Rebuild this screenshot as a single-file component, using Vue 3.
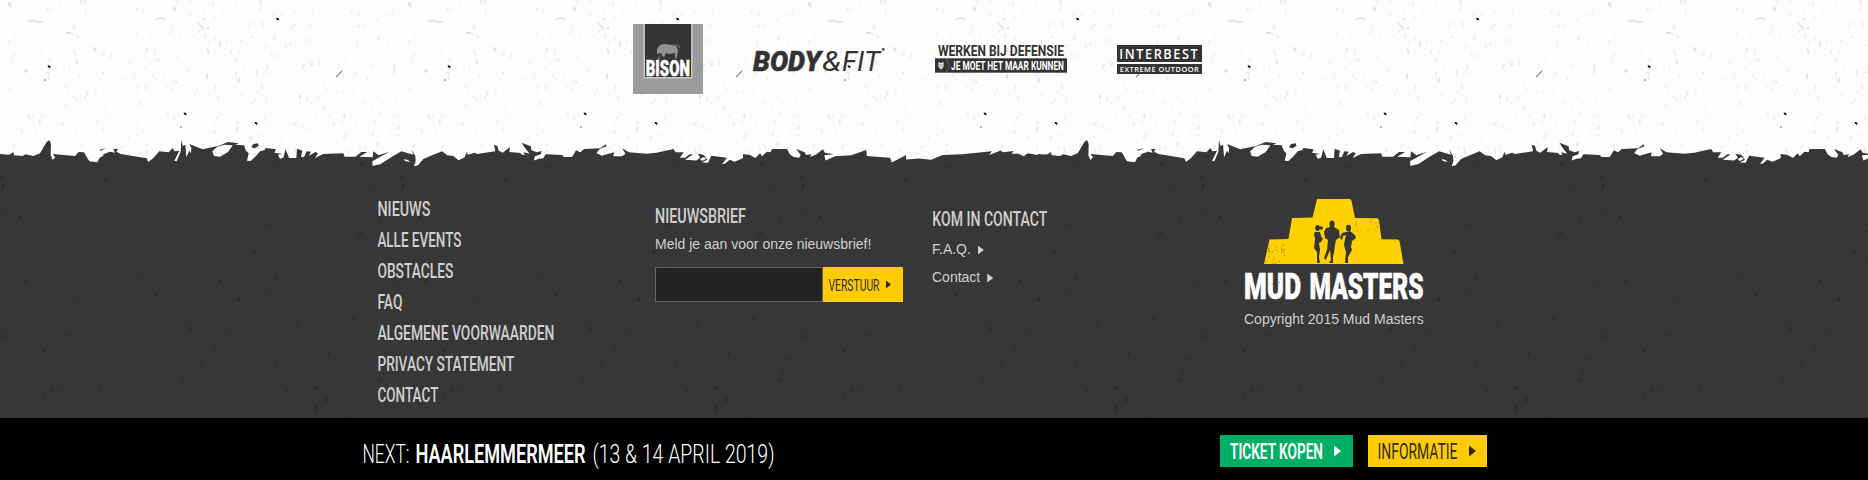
<script setup>
import { h } from 'vue'

// Condensed display lettering: text is fitted to width w with capitals of height cap.
const Cond = ({ t, w, cap, weight = 500, x = 0 }) =>
  h('svg', { width: w, height: Math.round(cap), style: { overflow: 'visible', display: 'block', flex: 'none' } }, [
    h('text', {
      x, y: cap, fill: 'currentColor', textLength: w, lengthAdjust: 'spacingAndGlyphs',
      'font-size': cap / 0.711, 'font-weight': weight,
      'font-family': 'Roboto, "Liberation Sans", sans-serif'
    }, t)
  ])
Cond.props = ['t', 'w', 'cap', 'weight', 'x']

const links = [
  ['NIEUWS', 53], ['ALLE EVENTS', 84], ['OBSTACLES', 76], ['FAQ', 25],
  ['ALGEMENE VOORWAARDEN', 177], ['PRIVACY STATEMENT', 137], ['CONTACT', 61]
]

function rng(seed) {
  let s = seed
  return () => (s = (s * 16807) % 2147483647) / 2147483647
}
function specks(seed, n, w, hgt, lo, hi) {
  const r = rng(seed)
  return Array.from({ length: n }, () => ({
    x: r() * w, y: r() * hgt, rx: 0.5 + r() * 0.8, ry: 0.8 + r() * 2.4,
    a: r() * 60 - 25, o: lo + r() * r() * (hi - lo)
  }))
}
const light = specks(71, 520, 400, 160, 0.015, 0.13)
const dark = specks(913, 170, 400, 280, 0.03, 0.24)
const blots = specks(411, 22, 400, 280, 0.06, 0.22)
const wear = specks(37, 60, 38, 22, 0.4, 0.9)
const ink = [[277.5, 19], [49, 66.6], [185, 113.7], [256, 123.3]]
const dots = [[45, 80], [181, 127], [208, 28], [176, 82]]
</script>

<template>
  <main class="page">
    <section class="partners">
      <svg class="backdrop" width="1868" height="160">
        <defs>
          <pattern id="paper" width="400" height="160" patternUnits="userSpaceOnUse">
            <rect width="400" height="160" fill="#fdfdfd" />
            <ellipse v-for="(s, i) in light" :key="i" :rx="s.rx" :ry="s.ry" :opacity="s.o"
              :transform="`translate(${s.x} ${s.y}) rotate(${s.a})`" />
            <path d="M28 22l5-2 3 2 7 0M156 20l3-2 6 1M198 23l6 6M66 32l7 2" stroke="#dedede" stroke-width="1.5" fill="none" />
            <path d="M336 77l3-2.5M339 74l3-3" stroke="#888" stroke-width="1.1" />
            <path v-for="p in ink" :key="p[0]" :transform="`translate(${p[0]} ${p[1]})`" d="M-1.5-1.2l2 .2 1.3 1.5-1.2 1-1.5-1z" />
            <circle v-for="(p, i) in dots" :key="p[0]" :cx="p[0]" :cy="p[1]" r=".7" :fill="i > 1 ? '#999' : '#444'" />
          </pattern>
        </defs>
        <rect width="1868" height="160" fill="url(#paper)" />
      </svg>

      <div class="logos">
        <svg class="bison" width="70" height="70">
          <rect width="70" height="70" fill="#9b9b9b" />
          <path d="M10.5 0h49v54.5h-49z" fill="#c9c9c9" />
          <path d="M12 0h46v53H12z" fill="#353535" />
          <path d="M24 26c1-4 4-6 8-6 4 1 8 0 11 2l2 4-1 6-1 2-1-1 0-4-5 1-4-1-2 4-2-1 0-2-2-1-3 1z" fill="#929292" />
          <path d="M39 22c4-2 7-1 8 2M27 31l-2 4h3M44 31l-1 4" stroke="#777" fill="none" />
          <text x="12.8" y="51.5" textLength="44" lengthAdjust="spacingAndGlyphs" font-size="22" font-weight="900" fill="#fff" stroke="#fff" stroke-width=".5">BISON</text>
        </svg>
        <svg class="bodyfit" width="132" height="26">
          <g fill="#333" font-style="italic">
            <text x="0" y="23" textLength="68" lengthAdjust="spacingAndGlyphs" font-size="28" font-weight="900" stroke="#333" stroke-width=".5">BODY</text>
            <text x="89" y="23" textLength="38" lengthAdjust="spacingAndGlyphs" font-size="28">FIT</text>
            <text x="69" y="23" textLength="19" lengthAdjust="spacingAndGlyphs" font-size="28">&amp;</text>
          </g>
          <circle cx="130.3" cy="1.2" r="1.5" fill="#555" />
        </svg>
        <svg class="defensie" width="132" height="29">
          <text x="3" y="11.7" textLength="126" lengthAdjust="spacingAndGlyphs" font-size="15" font-weight="700" fill="#333">WERKEN BIJ DEFENSIE</text>
          <rect y="14.3" width="132" height="14.4" fill="#333" />
          <path d="M3.5 18l2.5 1 2.5-1v5L6 25.5 3.5 23z" fill="#eee" />
          <path d="M4 20l2 1 2-1M4 22l2 1 2-1" stroke="#555" stroke-width=".6" fill="none" />
          <path d="M11.5 15l3 6.5-3 6.5" stroke="#777" stroke-width=".7" fill="none" />
          <text x="16" y="26" textLength="113" lengthAdjust="spacingAndGlyphs" font-size="12.3" font-weight="700" fill="#fff">JE MOET HET MAAR KUNNEN</text>
        </svg>
        <svg class="interbest" width="85" height="29">
          <path d="M0 0h85v17H0zM0 19h85v10H0z" fill="#333" />
          <g class="open" fill="#fff">
            <text x="2.3" y="14" textLength="80" lengthAdjust="spacingAndGlyphs" font-size="14.5" font-weight="600" letter-spacing="1.8">INTERBEST</text>
            <text x="2.8" y="26.7" textLength="79.5" lengthAdjust="spacingAndGlyphs" font-size="7.7" font-weight="600" letter-spacing=".5">EXTREME OUTDOOR</text>
          </g>
        </svg>
      </div>
    </section>

    <footer class="footer">
      <svg class="edge" width="1868" height="45">
        <defs>
          <g id="tear">
            <path transform="scale(.33333)" fill="#373737" d="M0 136V72L28 74 40 66 42 76 68 78 76 73 100 78 120 70 140 36 148 30 153 42 152 76 158 90 166 82 158 72 225 78 236 66 252 67 262 84 268 94 292 97 298 84 314 74 305 74 330 65 345 68 340 58 354 56 349 65 362 72 440 85 445 96 460 84 478 64 506 67 518 54 524 64 538 62 523 92 530 94 542 65 544 30 548 48 556 44 559 82 568 62 573 70 574 54 568 42 608 58 654 48 637 64 642 78 660 80 684 66 698 46 672 44 640 54 684 36 716 40 706 44 732 46 738 62 746 70 741 92 752 93 766 80 780 64 794 60 797 54 828 58 823 68 848 72 834 74 840 86 850 83 857 58 867 84 889 84 891 56 907 62 903 80 912 82 920 64 933 65 926 78 946 66 954 70 945 84 970 72 1030 70 1034 80 1066 80 1084 66 1102 66 1078 80 1118 82 1120 64 1136 76 1168 65 1145 78 1117 94 1118 108 1142 102 1176 80 1204 64 1240 74 1234 58 1246 78 1247 94 1242 109 1254 106 1270 87 1282 82 1326 64 1342 76 1360 78 1376 91 1394 82 1400 66 1404 74 1424 68 1432 72 1486 64 1482 44 1492 48 1496 62 1508 68 1530 51 1528 66 1562 69V136ZM760 42L774 40 776 48 764 55 754 52ZM298 60L320 54 302 62Z" />
            <path transform="translate(520) scale(.33807)" fill="#373737" d="M-2 134V70L14 75 10 66 28 70 14 52 5 38 32 48 34 60 50 66 64 62 61 72 44 78 41 90 58 84 68 84 76 72 124 74 130 80 154 80 166 60 178 66 190 56 238 54 254 42 256 48 236 56 226 68 242 76 278 66 276 78 302 78 312 70 302 54 322 66 374 70 404 67 454 56 460 66 484 66 473 82 488 82 502 72 512 72 488 88 522 90 533 82 526 70 544 74 554 88 538 96 556 97 566 76 612 82 598 101 608 98 620 88 635 94 660 83 659 71 680 74 696 83 710 69 716 78 730 64 742 66 745 56 790 56 798 72 810 80 826 82 830 73 817 56 842 66 846 74 862 72 858 80 875 73 896 57 902 67 928 72 900 75 904 90 932 78 980 75 1024 59 1026 77 1094 82 1100 96 1142 74 1142 87 1180 84 1216 88 1250 74 1308 72 1374 65 1396 63 1388 74 1422 61 1428 66 1460 62 1454 70 1474 70 1490 78 1502 69 1534 75 1568 72V134Z" />
            <path fill="#fdfdfd" d="M404 29l4 1 2 2-5-1zM700 29l4-2 2 2-4 2z" />
          </g>
        </defs>
        <use href="#tear" /><use href="#tear" x="1037.7" />
      </svg>
      <svg class="grain" width="1868" height="258">
        <defs>
          <pattern id="mud" width="400" height="280" patternUnits="userSpaceOnUse">
            <ellipse v-for="(s, i) in dark" :key="i" :rx="s.rx * 1.3" :ry="s.ry" :opacity="s.o"
              :transform="`translate(${s.x} ${s.y}) rotate(${s.a + 15})`" />
            <ellipse v-for="(s, i) in blots" :key="'b' + i" :rx="s.rx * 2" :ry="s.ry * 1.3" :opacity="s.o"
              :transform="`translate(${s.x} ${s.y}) rotate(${s.a + 30})`" />
          </pattern>
        </defs>
        <rect width="1868" height="258" fill="url(#mud)" />
      </svg>

      <div class="columns">
        <nav class="menu">
          <Cond v-for="l in links" :key="l[0]" :t="l[0]" :w="l[1]" :cap="14.3" :x="-0.6" />
        </nav>
        <div class="news">
          <Cond t="NIEUWSBRIEF" :w="91" :cap="14.5" />
          <p>Meld je aan voor onze nieuwsbrief!</p>
          <form @submit.prevent>
            <input type="text" aria-label="E-mail">
            <button><Cond t="VERSTUUR" :w="51" :cap="11.5" :weight="400" :x="-0.5" /><i class="arrow small"></i></button>
          </form>
        </div>
        <div class="contact">
          <Cond t="KOM IN CONTACT" :w="115" :cap="14.5" :x="-0.7" />
          <a>F.A.Q. <i class="arrow mid"></i></a>
          <a>Contact <i class="arrow mid"></i></a>
        </div>
        <div class="brand">
          <svg width="180" height="103">
            <path d="M73 0h33l1.500 1.500 3.500 17.500 22.500.3 1.500 2 2.500 19 16.500.2 1.500 1.500 4 23H20l5.500-24.500 19-.5 3.500-21 20.500-.5z" fill="#ffd100" />
            <g fill="#353535">
              <ellipse cx="88" cy="25" rx="2.600" ry="3.500" />
              <path d="M86 28h4l5 3 1 7-4 3-1 5-1 7-1 5v6h-4l2-3-1-10-3 7-1 3-2-2 3-8 1-10-3-2-1-6 2-4z" />
              <ellipse cx="73.5" cy="29" rx="2.300" ry="3" />
              <path d="M75 27l4 1-1 3-3-1zM71 33l5 0 1 4 2 3-2 3-2 1 1 7-1 7 1 6h-3l0-11-3-4 1-9-1-5z" />
              <ellipse cx="104.5" cy="29" rx="2.500" ry="3.200" />
              <path d="M98 34l8-2 5 4 1 3-4 3-1 6 1 3-4 7v6h-3l1-11-2-7 1-6 1-4-3 1-1 4-2-2z" />
            </g>
            <g transform="translate(22 43)">
              <ellipse v-for="(s, i) in wear.slice(0, 34)" :key="i" :cx="s.x * 0.5" :cy="s.y" rx=".5" ry=".6" :opacity="s.o" fill="#333" />
            </g>
            <g transform="translate(108 20)">
              <ellipse v-for="(s, i) in wear.slice(36)" :key="i" :cx="s.x * 0.7" :cy="s.y * 0.6" rx=".5" ry=".5" :opacity="s.o * 0.8" fill="#333" />
            </g>
            <text x="0" y="100.3" textLength="57" lengthAdjust="spacingAndGlyphs" font-size="37.5" font-weight="900" fill="#fff" stroke="#fff" stroke-width=".6">MUD</text>
            <text x="65.5" y="100.3" textLength="114" lengthAdjust="spacingAndGlyphs" font-size="37.5" font-weight="900" fill="#fff" stroke="#fff" stroke-width=".6">MASTERS</text>
            <g v-for="k in 4" :key="k" :transform="`translate(${k * 42 - 38} 76)`">
              <ellipse v-for="(s, i) in wear.slice(k * 9, k * 9 + 18)" :key="i" :cx="s.x" :cy="s.y" rx=".5" ry=".8" :opacity="s.o * 0.6" fill="#333" />
            </g>
          </svg>
          <p>Copyright 2015 Mud Masters</p>
        </div>
      </div>
    </footer>

    <section class="next">
      <Cond t="NEXT:" :w="47" :cap="18.5" :weight="300" :x="-0.5" />
      <Cond class="place" t="HAARLEMMERMEER" :w="170" :cap="18.5" :weight="600" :x="-0.5" />
      <Cond class="date" t="(13 &amp; 14 APRIL 2019)" :w="182" :cap="18.5" :weight="300" :x="-0.5" />
      <a class="btn green"><Cond t="TICKET KOPEN" :w="93" :cap="15.3" :weight="600" /><i class="arrow big"></i></a>
      <a class="btn yellow"><Cond t="INFORMATIE" :w="80" :cap="15.3" :weight="400" :x="-0.5" /><i class="arrow big"></i></a>
    </section>
  </main>
</template>

<style>
body { margin: 0; }
</style>

<style scoped>
.page { width: 1868px; height: 480px; overflow: hidden; display: flex; flex-direction: column; font: 14px/18px "Liberation Sans", Arial, sans-serif; color: #d0d0d0; }
svg { display: block; flex: none; overflow: visible; font-family: Roboto, "Liberation Sans", sans-serif; }
p { margin: 0; }
.partners { height: 130px; position: relative; }
.backdrop { position: absolute; inset: 0; overflow: hidden; }
.logos { position: relative; display: flex; align-items: flex-start; padding: 24px 0 0 633px; }
.bodyfit { margin: 24px 0 0 50px; }
.defensie { margin: 20px 0 0 50px; }
.interbest { margin: 21px 0 0 50px; }
.open { font-family: "Open Sans", sans-serif; }
.footer { height: 288px; position: relative; background: linear-gradient(transparent 44px, #373737 44px); }
.edge, .grain { position: absolute; left: 0; top: 0; overflow: hidden; }
.grain { top: 30px; }
.columns { position: relative; display: grid; grid-template-columns: 277px 278px 311px 180px; padding: 68px 0 0 378px; }
.menu { display: flex; flex-direction: column; gap: 16px; padding-top: 4px; }
.menu svg { height: 15px; }
.news { padding-top: 10px; }
.news p { margin-top: 12px; white-space: nowrap; }
form { display: flex; margin-top: 14px; height: 35px; }
input { box-sizing: border-box; width: 168px; height: 35px; border: 1px solid #666; background: #232323; padding: 0; border-radius: 0; }
button { width: 80px; height: 35px; border: 0; border-radius: 0; padding: 0 0 0 6px; background: #ffcb05; color: #2f2d20; display: flex; align-items: center; }
.contact { padding-top: 13px; display: flex; flex-direction: column; }
.contact a { display: flex; align-items: center; height: 18px; margin: 10px 0 0 -1px; }
.contact svg + a { margin-top: 14px; }
.arrow { width: 5px; height: 8px; background: currentColor; clip-path: polygon(0 0, 100% 50%, 0 100%); flex: none; }
.mid { width: 6px; height: 9px; margin: 2px 0 0 7px; }
.small { margin-left: 6px; }
.big { width: 7px; height: 11px; margin-left: 11px; }
.brand { padding-top: 1px; }
.brand p { margin-top: 8px; white-space: nowrap; }
.next { height: 62px; background: #000; color: #fff; display: flex; align-items: flex-start; padding-left: 363px; }
.next > svg { margin-top: 26px; }
.next > .place { margin-left: 6px; }
.next > .date { margin-left: 7px; }
.btn { height: 32px; margin-top: 17px; display: flex; align-items: center; padding-left: 10px; box-sizing: border-box; }
.green { background: #00af66; width: 133px; margin-left: 445px; }
.yellow { background: #ffcb05; color: #2f2d20; width: 119px; margin-left: 15px; }
</style>
